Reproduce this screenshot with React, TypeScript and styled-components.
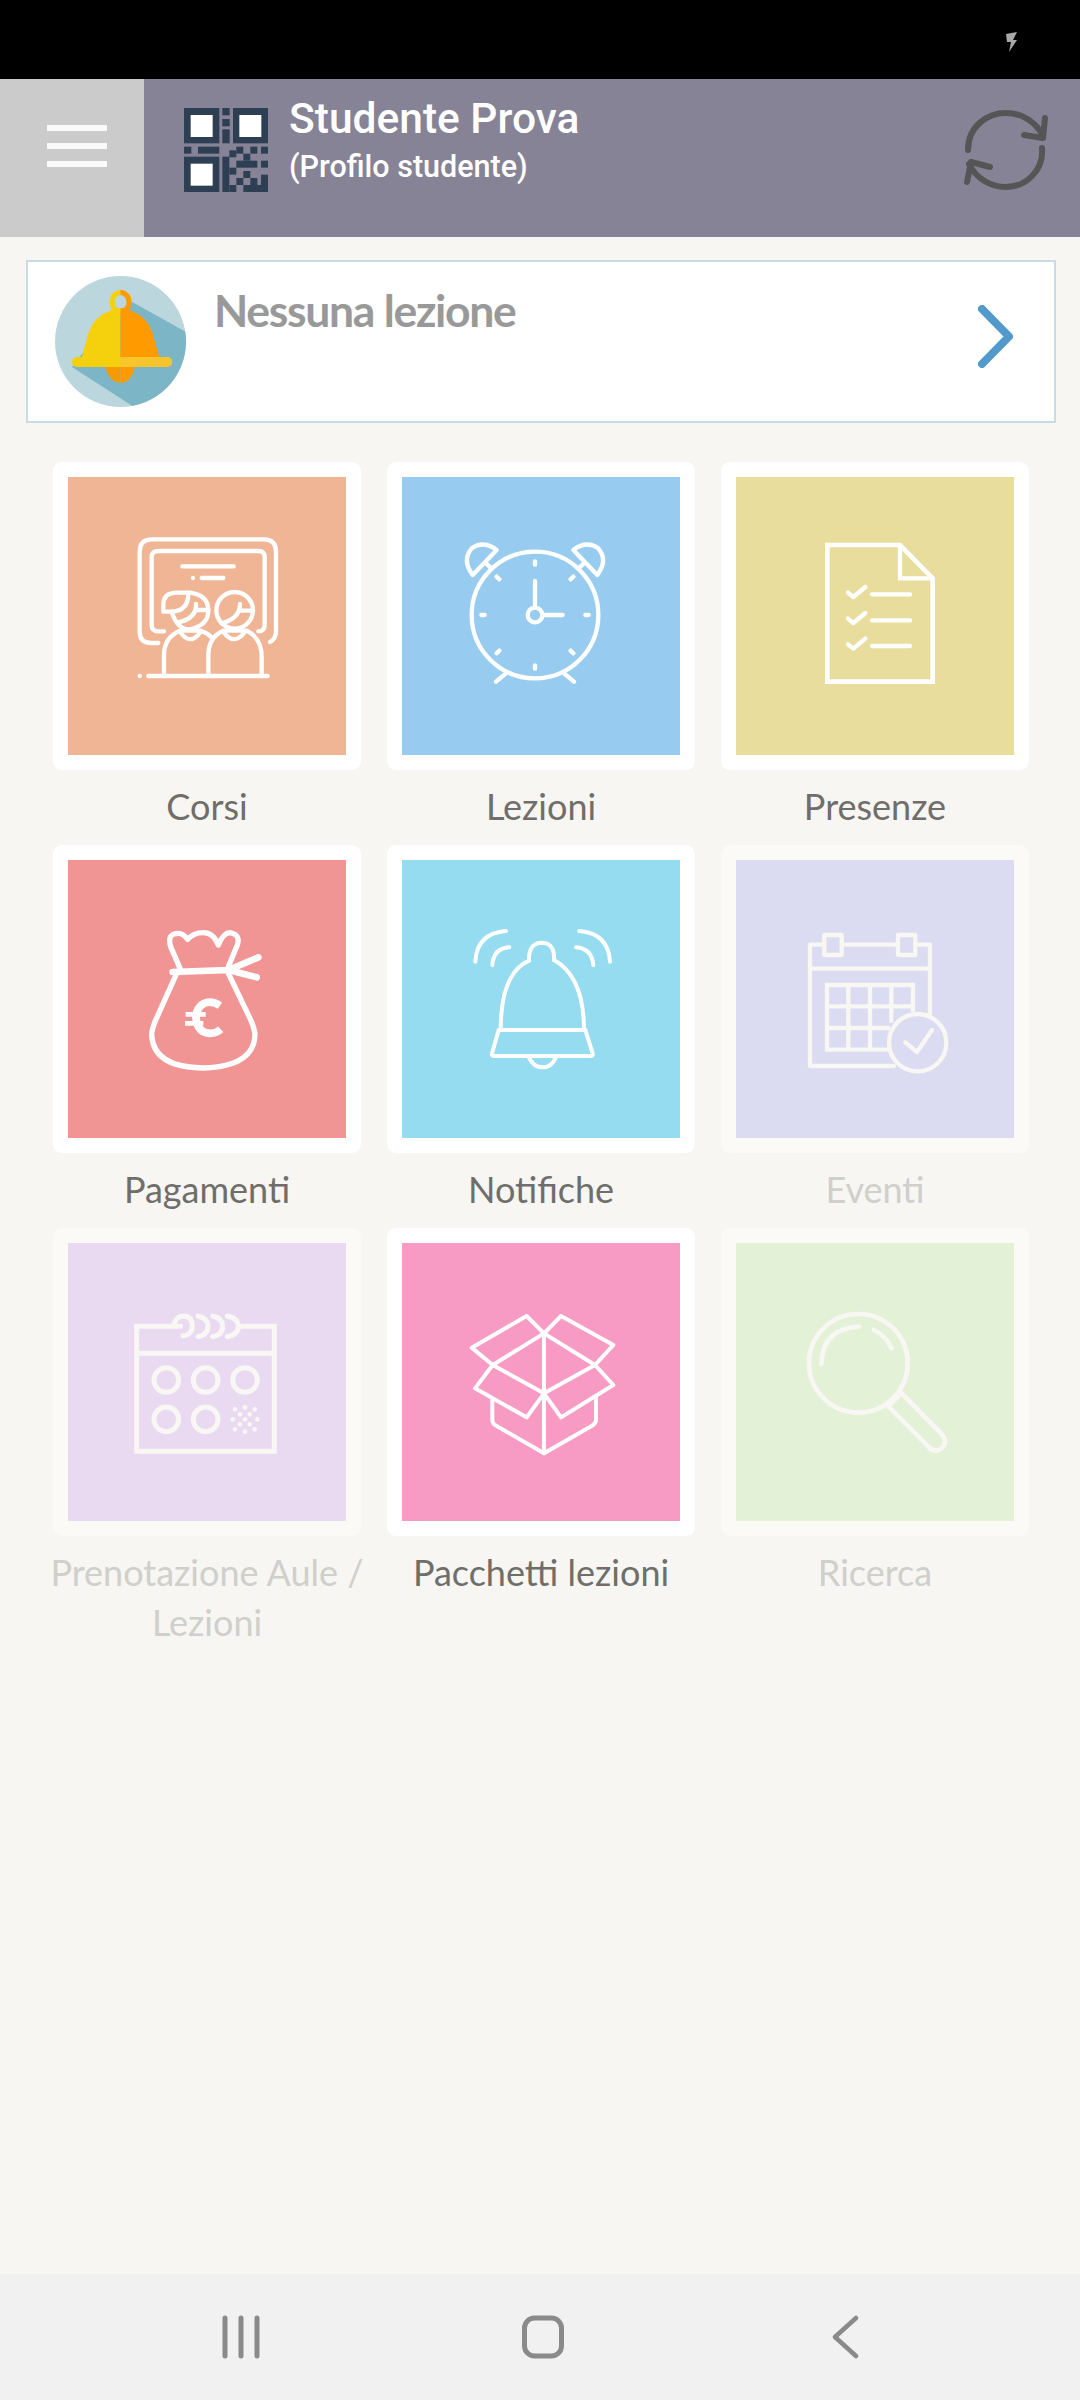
import React from "react";
import styled, { createGlobalStyle } from "styled-components";

const Global = createGlobalStyle`
  html, body { margin: 0; padding: 0; background: #f7f6f2; }
  * { box-sizing: border-box; }
`;

const Page = styled.div`
  width: 1080px;
  height: 2400px;
  display: flex;
  flex-direction: column;
  background: #f7f6f2;
  overflow: hidden;
`;

const StatusBar = styled.div`
  height: 79px;
  background: #000;
  display: flex;
  align-items: center;
  justify-content: flex-end;
  padding: 5px 62px 0 0;
`;

const Header = styled.header`
  height: 158px;
  display: flex;
  background: #858395;
`;

const MenuButton = styled.div`
  width: 144px;
  background: #cbcbcb;
  display: flex;
  flex-direction: column;
  gap: 12px;
  padding: 46px 0 0 47px;
`;

const MenuBar = styled.span`
  display: block;
  width: 60px;
  height: 6px;
  background: #fafafa;
`;

const QrBox = styled.svg`
  width: 84px;
  height: 84px;
  margin: 29px 0 0 40px;
  flex: none;
`;

const UserText = styled.div`
  flex: 1;
  margin: 16px 0 0 21px;
  color: #fff;
  font-family: Roboto, sans-serif;
`;

const UserName = styled.div`
  font-size: 42.5px;
  font-weight: 500;
  line-height: 48px;
`;

const UserRole = styled.div`
  font-size: 30.5px;
  font-weight: 500;
  line-height: 38px;
  margin-top: 5px;
`;

const Refresh = styled.svg`
  width: 84px;
  height: 80px;
  margin: 31px 32px 0 0;
  flex: none;
`;

const Main = styled.main`
  flex: 1;
  display: flex;
  flex-direction: column;
  padding: 23px 24px 0 26px;
`;

const LessonCard = styled.div`
  height: 163px;
  background: #fff;
  border: 2px solid #c8dce6;
  display: flex;
  padding: 14px 0 0 27px;
  position: relative;
`;

const BellBadge = styled.svg`
  width: 131px;
  height: 131px;
  flex: none;
`;

const LessonTitle = styled.div`
  flex: 1;
  margin: 9px 0 0 28px;
  color: #999;
  font-family: Lato, sans-serif;
  font-size: 44.5px;
  font-weight: 700;
  line-height: 50px;
  letter-spacing: -1.3px;
`;

const Chevron = styled.svg`
  width: 36px;
  height: 63px;
  flex: none;
  margin: 29px 40px 0 0;
`;

const Grid = styled.div`
  display: grid;
  grid-template-columns: repeat(3, 308px);
  grid-auto-rows: minmax(383px, auto);
  column-gap: 26px;
  margin: 39px 0 0 27px;
`;

const Cell = styled.div`
  display: flex;
  flex-direction: column;
  align-items: center;
`;

const Tile = styled.div<{ $off?: boolean }>`
  width: 308px;
  height: 308px;
  padding: 15px;
  border-radius: 9px;
  background: ${(p) => (p.$off ? "#fbfaf7" : "#fff")};
`;

const TileArt = styled.svg<{ $bg: string; $ink: string }>`
  display: block;
  width: 278px;
  height: 278px;
  background: ${(p) => p.$bg};
  fill: none;
  stroke: ${(p) => p.$ink};
  stroke-linecap: round;
  stroke-linejoin: round;
  stroke-width: 13;
`;

const Label = styled.div<{ $off?: boolean }>`
  width: 316px;
  flex: none;
  margin-top: 11px;
  text-align: center;
  font-family: Lato, sans-serif;
  font-size: 36px;
  line-height: 50px;
  color: ${(p) => (p.$off ? "#cfcfcb" : "#6f6e6a")};
`;

const NavBar = styled.nav`
  height: 126px;
  background: #f1f1f1;
  display: grid;
  grid-template-columns: repeat(3, 302px);
  justify-content: center;
  justify-items: center;
  align-items: center;
  padding: 0 0 0 6px;
`;

const NavIcon = styled.svg`
  height: 44px;
  width: 48px;
  fill: none;
  stroke: #8a8a8a;
  stroke-linecap: round;
  stroke-linejoin: round;
`;

const ink = "#ffffff";
const faded = "#f8f7f4";

const CorsiIcon = () => (
  <>
    <path d="M355 579H335Q299 579 299 545V305Q299 268 335 268H672Q708 268 708 305V545Q708 565 690 576" />
    <path d="M372 544H355Q335 544 335 525V322Q335 303 355 303H655Q674 303 674 322V525Q674 544 655 544" />
    <path d="M427 349H581M485 384H550M459 384h.1" />
    <path d="M395 485H370V465Q370 428 410 428H450Q505 435 505 482Q505 525 450 538Q412 540 395 485Z" />
    <path d="M445 432Q445 482 395 485M468 462Q470 505 415 517M472 480H505" />
    <circle cx="584" cy="481" r="55" />
    <path d="M600 462Q600 505 545 520M600 482H638" />
    <path d="M372 675V615Q372 562 420 542H480Q505 550 518 565" />
    <path d="M505 675V615Q505 562 550 542H620Q665 565 665 620V675" />
    <path d="M420 545Q450 590 482 545M550 545Q582 590 615 545" />
    <path d="M325 678H683M299 678h.1" />
  </>
);

const LezioniIcon = () => (
  <>
    <circle cx="465" cy="495" r="190" />
    <path d="M465 334V344M465 646V656M304 495H314M616 495H626M350 380L358 388M580 380L572 388M350 610L358 602M580 610L572 602" />
    <path d="M465 393V470M490 495H548" />
    <circle cx="465" cy="495" r="22" />
    <path d="M350 300Q310 270 275 295Q245 330 278 375Z" />
    <path d="M580 300Q620 270 655 295Q685 330 652 375Z" />
    <path d="M316 338L335 356M614 338L595 356" />
    <path d="M378 670L348 695M552 670L582 695" />
  </>
);

const PresenzeIcon = () => (
  <>
    <path strokeLinejoin="miter" strokeLinecap="butt" strokeWidth="14" d="M352 285H570L668 385V695H352Z" />
    <path strokeLinejoin="miter" strokeLinecap="butt" d="M570 285V385H668" />
    <path d="M414 428L430 441L466 411M414 506L430 519L466 489M414 583L430 596L466 566" />
    <path d="M486 433H600M486 511H600M486 588H600" />
  </>
);

const PagamentiIcon = () => (
  <g strokeWidth="16">
    <path d="M420 415L392 350Q380 310 415 310Q430 310 443 328Q460 308 490 308Q520 308 535 345Q550 308 570 308Q605 315 590 350L565 410" />
    <path strokeWidth="20" d="M398 426L565 420L655 382M565 420L650 442" />
    <path d="M410 430L345 575Q335 600 335 615Q340 712 490 714Q645 710 645 610Q640 585 630 565L565 430" />
    <path strokeLinecap="butt" strokeWidth="23" d="M540 527Q510 507 484 525Q464 545 469 570Q474 608 510 610Q530 610 542 598" />
    <path strokeLinecap="butt" strokeWidth="14" d="M437 553H497M435 580H490" />
  </g>
);

const NotificheIcon = () => (
  <g strokeWidth="12">
    <path d="M447 392Q445 338 487 338Q525 340 522 390" />
    <path d="M447 392Q362 430 362 600M522 390Q612 440 612 600" />
    <path d="M358 600H616" />
    <path d="M356 600L336 670Q334 678 342 678H632Q640 678 638 670L616 600" />
    <path d="M447 683Q460 712 487 712Q515 712 527 683" />
    <path d="M286 395Q290 310 378 303M337 405Q340 355 388 352M690 395Q685 310 598 303M640 405Q635 355 588 352" />
  </g>
);

const EventiIcon = () => (
  <>
    <path d="M552 708H300V344H340M400 344H560M622 344H660V550" />
    <path d="M300 416H660" />
    <rect x="343" y="315" width="52" height="60" />
    <rect x="564" y="315" width="52" height="60" />
    <path strokeLinejoin="miter" strokeLinecap="butt" d="M535 659H351V465H609V545" />
    <path strokeLinecap="butt" d="M351 529H609M351 594H540M415 465V659M480 465V659M544 465V578" />
    <circle cx="623" cy="638" r="86" />
    <path d="M586 637L621 666L666 600" />
  </>
);

const dots: [number, number][] = [
  [618, 592], [588, 598], [647, 598], [603, 613], [632, 613], [581, 628], [618, 628],
  [655, 628], [603, 643], [632, 643], [588, 658], [647, 658], [618, 665],
];

const PrenotazioneIcon = () => (
  <g strokeWidth="15">
    <path strokeLinejoin="miter" strokeLinecap="butt" d="M400 349H293V724H706V349H600" />
    <path strokeLinecap="butt" d="M293 430H706" />
    <circle cx="382" cy="510" r="37" />
    <circle cx="500" cy="510" r="37" />
    <circle cx="618" cy="510" r="37" />
    <circle cx="382" cy="628" r="37" />
    <circle cx="500" cy="628" r="37" />
    {dots.map(([x, y]) => (
      <circle key={`${x}-${y}`} cx={x} cy={y} r="7" fill={faded} stroke="none" />
    ))}
    <path d="M403 349Q410 318 435 318Q460 320 460 349Q458 375 432 378M403 349H425" />
    <path d="M477 318Q507 325 507 349Q507 375 477 380M521 318Q551 325 551 349Q551 375 521 380M565 318Q598 325 598 349Q598 375 565 380" />
  </g>
);

const PacchettiIcon = () => (
  <g strokeWidth="12">
    <path d="M338 465L275 413L440 318L492 370L543 318L700 405L645 465" />
    <path d="M492 370L338 465L492 550L645 465Z" />
    <path d="M338 465L285 535L440 622L492 550L543 622L700 525L645 465" />
    <path d="M492 370V730" />
    <path d="M337 570V630Q337 642 350 648L492 730L635 648Q648 640 648 630V560" />
  </g>
);

const RicercaIcon = () => (
  <g strokeWidth="14">
    <circle cx="445" cy="460" r="148" />
    <path d="M575 550L695 672Q715 695 695 715Q672 730 655 710L535 590M540 583L568 555" />
    <path d="M334 462Q338 355 447 350M492 360Q525 375 545 415" />
  </g>
);

type Item = {
  label: string;
  bg: string;
  box: string;
  off?: boolean;
  Art: React.FC;
};

const items: Item[] = [
  { label: "Corsi", bg: "#efb595", box: "84 81 834 834", Art: CorsiIcon },
  { label: "Lezioni", bg: "#97cbf0", box: "66 81 834 834", Art: LezioniIcon },
  { label: "Presenze", bg: "#e9dd9d", box: "78 81 834 834", Art: PresenzeIcon },
  { label: "Pagamenti", bg: "#f19494", box: "84 90 834 834", Art: PagamentiIcon },
  { label: "Notifiche", bg: "#96dcf1", box: "66 90 834 834", Art: NotificheIcon },
  { label: "Eventi", bg: "#dbdbf1", box: "78 90 834 834", off: true, Art: EventiIcon },
  { label: "Prenotazione Aule / Lezioni", bg: "#e9daf1", box: "87 99 834 834", off: true, Art: PrenotazioneIcon },
  { label: "Pacchetti lezioni", bg: "#f89bc4", box: "66 99 834 834", Art: PacchettiIcon },
  { label: "Ricerca", bg: "#e3f2d6", box: "78 99 834 834", off: true, Art: RicercaIcon },
];

const qrCells: [number, number, number, number][] = [
  [187, 54, 22, 22], [187, 87, 22, 22], [187, 118, 22, 42], [72, 170, 22, 21], [114, 170, 64, 21],
  [187, 200, 21, 106], [208, 181, 21, 21], [229, 170, 21, 21], [250, 191, 21, 21], [271, 170, 21, 21],
  [303, 170, 21, 21], [229, 212, 63, 21], [303, 212, 21, 21], [208, 233, 21, 21], [250, 243, 21, 21],
  [229, 264, 21, 21], [271, 264, 21, 21], [208, 285, 21, 21], [250, 285, 74, 21], [303, 254, 21, 52],
];

const finders: [number, number, number, number][] = [
  [72, 54, 20, 21],
  [219, 54, 19, 21],
  [72, 200, 20, 21],
];

export default function App() {
  return (
    <Page>
      <Global />
      <StatusBar>
        <svg width="14" height="20" viewBox="0 0 14 20">
          <path d="M2 2L13 0L9 8H13L5 20L7 10H3Z" fill="#a8a8a8" />
        </svg>
      </StatusBar>
      <Header>
        <MenuButton>
          <MenuBar />
          <MenuBar />
          <MenuBar />
        </MenuButton>
        <QrBox viewBox="72 54 252 252">
          {finders.map(([x, y, a, b]) => (
            <g key={`${x}-${y}`}>
              <rect x={x} y={y} width="106" height="106" fill="#2e3f54" />
              <rect x={x + a} y={y + b} width="66" height="66" fill="#fff" />
            </g>
          ))}
          {qrCells.map(([x, y, w, h]) => (
            <rect key={`${x}-${y}`} x={x} y={y} width={w} height={h} fill="#2e3f54" />
          ))}
        </QrBox>
        <UserText>
          <UserName>Studente Prova</UserName>
          <UserRole>(Profilo studente)</UserRole>
        </UserText>
        <Refresh viewBox="0 0 84 80" fill="none" stroke="#555" strokeWidth="6" strokeLinecap="round" strokeLinejoin="round">
          <path d="M4 40C4 15 25 3 42 3C58 3 72 12 79 26" />
          <path d="M81 8L79 28L60 25" />
          <path d="M78 38C80 60 62 77 42 77C26 77 12 68 5 54" />
          <path d="M3 72L7 52L26 57" />
        </Refresh>
      </Header>
      <Main>
        <LessonCard>
          <BellBadge viewBox="0 0 131 131">
            <defs>
              <clipPath id="badge">
                <circle cx="65.5" cy="65.5" r="65.5" />
              </clipPath>
            </defs>
            <g clipPath="url(#badge)">
              <rect width="131" height="131" fill="#bbd6dc" />
              <path d="M70 22L131 56V131H79L17 91Z" fill="#7cb5c6" />
              <path d="M50 90H65.5V107Q54 106 50 90Z" fill="#f59a00" />
              <path d="M80 90H65.5V107Q77 106 80 90Z" fill="#ff9a00" />
              <ellipse cx="65.5" cy="26" rx="11" ry="12" fill="#f5d10d" />
              <path d="M65.5 14A11 12 0 0 1 65.5 38Z" fill="#ff9a00" />
              <ellipse cx="65.5" cy="26" rx="6" ry="7" fill="#bbd6dc" />
              <path d="M65.5 32Q38 36 32 62L26 84H65.5Z" fill="#f5d10d" />
              <path d="M65.5 32Q93 36 99 62L105 84H65.5Z" fill="#ff9a00" />
              <rect x="17" y="81" width="100" height="10" rx="5" fill="#f5d10d" />
              <path d="M65.5 81H112a5 5 0 0 1 0 10H65.5Z" fill="#f8c52c" />
            </g>
          </BellBadge>
          <LessonTitle>Nessuna lezione</LessonTitle>
          <Chevron viewBox="0 0 36 63" fill="none" stroke="#5299cc" strokeWidth="8" strokeLinejoin="round" strokeLinecap="round">
            <path d="M4 4L31 31.5L4 59" />
          </Chevron>
        </LessonCard>
        <Grid>
          {items.map(({ label, bg, box, off, Art }) => (
            <Cell key={label}>
              <Tile $off={off}>
                <TileArt viewBox={box} $bg={bg} $ink={off ? faded : ink}>
                  <Art />
                </TileArt>
              </Tile>
              <Label $off={off}>{label}</Label>
            </Cell>
          ))}
        </Grid>
      </Main>
      <NavBar>
        <NavIcon viewBox="0 0 48 44" strokeWidth="5">
          <path d="M8 3V41M24 3V41M40 3V41" />
        </NavIcon>
        <NavIcon viewBox="0 0 48 44" strokeWidth="5">
          <rect x="5.5" y="3" width="37" height="38" rx="10" />
        </NavIcon>
        <NavIcon viewBox="0 0 48 44" strokeWidth="4.5">
          <path d="M35 3L14 22L35 41" />
        </NavIcon>
      </NavBar>
    </Page>
  );
}
